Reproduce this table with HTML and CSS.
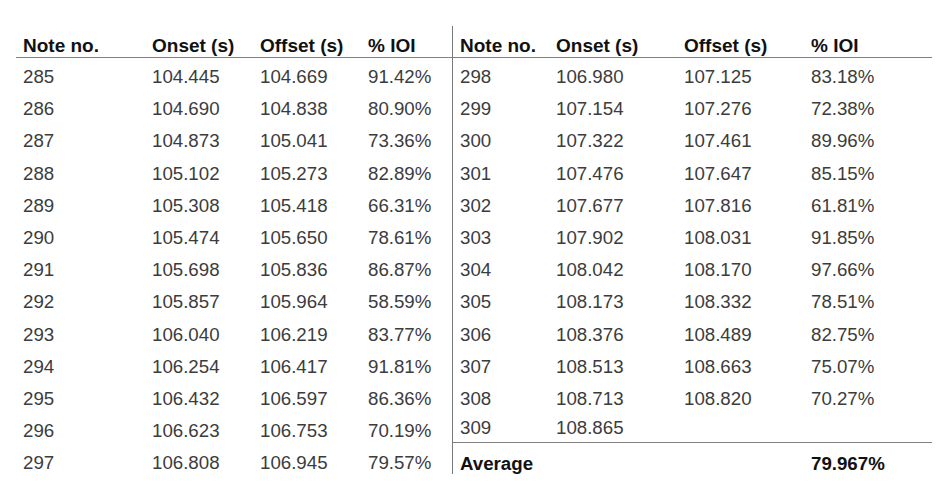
FILE: index.html
```html
<!DOCTYPE html>
<html>
<head>
<meta charset="utf-8">
<link rel="stylesheet" href="styles.css">
</head>
<body>
<div class="tables">
  <div class="half left">
    <div class="row head"><span>Note no.</span><span>Onset (s)</span><span>Offset (s)</span><span>% IOI</span></div>
    <div class="body">
      <div class="row"><span>285</span><span>104.445</span><span>104.669</span><span>91.42%</span></div>
      <div class="row"><span>286</span><span>104.690</span><span>104.838</span><span>80.90%</span></div>
      <div class="row"><span>287</span><span>104.873</span><span>105.041</span><span>73.36%</span></div>
      <div class="row"><span>288</span><span>105.102</span><span>105.273</span><span>82.89%</span></div>
      <div class="row"><span>289</span><span>105.308</span><span>105.418</span><span>66.31%</span></div>
      <div class="row"><span>290</span><span>105.474</span><span>105.650</span><span>78.61%</span></div>
      <div class="row"><span>291</span><span>105.698</span><span>105.836</span><span>86.87%</span></div>
      <div class="row"><span>292</span><span>105.857</span><span>105.964</span><span>58.59%</span></div>
      <div class="row"><span>293</span><span>106.040</span><span>106.219</span><span>83.77%</span></div>
      <div class="row"><span>294</span><span>106.254</span><span>106.417</span><span>91.81%</span></div>
      <div class="row"><span>295</span><span>106.432</span><span>106.597</span><span>86.36%</span></div>
      <div class="row"><span>296</span><span>106.623</span><span>106.753</span><span>70.19%</span></div>
      <div class="row"><span>297</span><span>106.808</span><span>106.945</span><span>79.57%</span></div>
    </div>
  </div>
  <div class="half right">
    <div class="row head"><span>Note no.</span><span>Onset (s)</span><span>Offset (s)</span><span>% IOI</span></div>
    <div class="body">
      <div class="row"><span>298</span><span>106.980</span><span>107.125</span><span>83.18%</span></div>
      <div class="row"><span>299</span><span>107.154</span><span>107.276</span><span>72.38%</span></div>
      <div class="row"><span>300</span><span>107.322</span><span>107.461</span><span>89.96%</span></div>
      <div class="row"><span>301</span><span>107.476</span><span>107.647</span><span>85.15%</span></div>
      <div class="row"><span>302</span><span>107.677</span><span>107.816</span><span>61.81%</span></div>
      <div class="row"><span>303</span><span>107.902</span><span>108.031</span><span>91.85%</span></div>
      <div class="row"><span>304</span><span>108.042</span><span>108.170</span><span>97.66%</span></div>
      <div class="row"><span>305</span><span>108.173</span><span>108.332</span><span>78.51%</span></div>
      <div class="row"><span>306</span><span>108.376</span><span>108.489</span><span>82.75%</span></div>
      <div class="row"><span>307</span><span>108.513</span><span>108.663</span><span>75.07%</span></div>
      <div class="row"><span>308</span><span>108.713</span><span>108.820</span><span>70.27%</span></div>
      <div class="row last"><span>309</span><span>108.865</span><span></span><span></span></div>
      <div class="row avg"><span>Average</span><span></span><span></span><span>79.967%</span></div>
    </div>
  </div>
</div>
</body>
</html>
```

FILE: styles.css
```css
html, body {
  margin: 0;
  padding: 0;
  background: #ffffff;
}

body {
  font-family: "Liberation Sans", Arial, sans-serif;
  font-size: 18.7px;
  color: #3c3c3c;
}

.tables {
  display: flex;
  align-items: flex-start;
  padding: 26px 0 0 16px;
}

.half {
  display: flex;
  flex-direction: column;
}

.left {
  width: 436px;
}

.right {
  width: 479px;
  border-left: 1px solid #7a7a7a;
}

.row {
  display: grid;
  align-items: center;
  line-height: 32.2px;
  white-space: nowrap;
}

.left .row {
  grid-template-columns: 129px 108px 108px 91px;
}

.left .row span {
  padding-left: 7px;
}

.right .row {
  grid-template-columns: 96px 128px 127px 128px;
}

.right .row span {
  padding-left: 7px;
}

.row.head {
  font-weight: bold;
  font-size: 19px;
  color: #111111;
  line-height: 22px;
  padding-top: 9px;
  border-bottom: 1px solid #808080;
  height: 22px;
}

.body {
  padding-top: 3px;
}

.row.last {
  line-height: 26px;
  padding-bottom: 1px;
  border-bottom: 1px solid #808080;
}

.row.avg {
  font-weight: bold;
  color: #111111;
  line-height: 20px;
  padding-top: 11px;
}
```
